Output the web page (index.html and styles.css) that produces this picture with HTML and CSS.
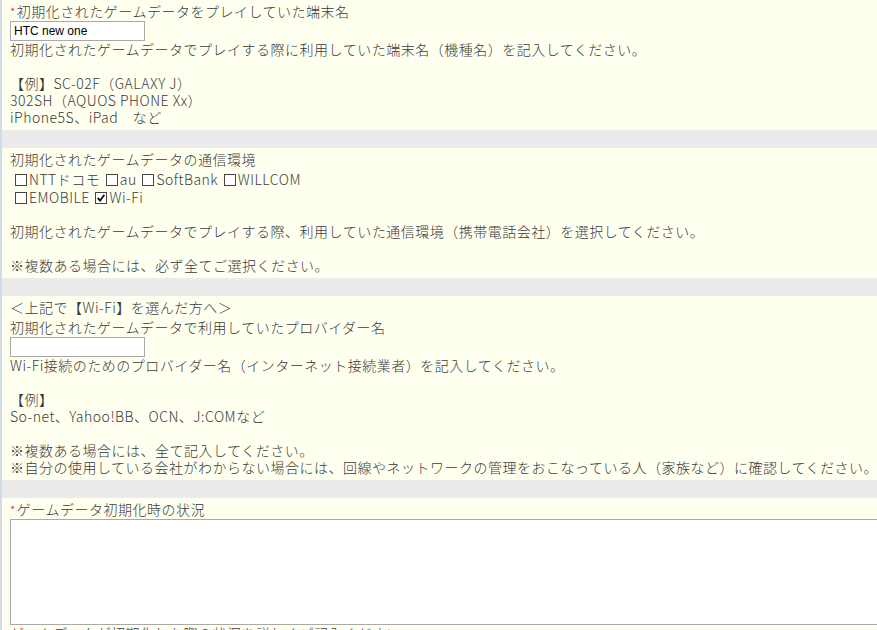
FILE: index.html
```html
<!DOCTYPE html>
<html lang="ja">
<head>
  <meta charset="UTF-8">
  <title>お問い合わせフォーム</title>
  <link rel="stylesheet" href="styles.css">
</head>
<body>
  <div class="form">
    <div class="item">
      <div class="label"><span class="req">*</span>初期化されたゲームデータをプレイしていた端末名</div>
      <input type="text" class="text" value="HTC new one">
      <div class="note">初期化されたゲームデータでプレイする際に利用していた端末名（機種名）を記入してください。<br><br>【例】SC-02F（GALAXY J）<br>302SH（AQUOS PHONE Xx）<br>iPhone5S、iPad　など</div>
    </div>
    <div class="sep"></div>

    <div class="item">
      <div class="label">初期化されたゲームデータの通信環境</div>
      <div class="checks">
        <label class="check"><span class="box"></span>NTTドコモ</label>
        <label class="check"><span class="box"></span>au</label>
        <label class="check"><span class="box"></span>SoftBank</label>
        <label class="check"><span class="box"></span>WILLCOM</label>
        <br>
        <label class="check"><span class="box"></span>EMOBILE</label>
        <label class="check"><span class="box checked"><svg viewBox="0 0 12 12" width="10" height="10"><path d="M2 6 L5 9 L10 2" fill="none" stroke="#111" stroke-width="2.2"/></svg></span>Wi-Fi</label>
      </div>
      <div class="note gap">初期化されたゲームデータでプレイする際、利用していた通信環境（携帯電話会社）を選択してください。<br><br>※複数ある場合には、必ず全てご選択ください。</div>
    </div>
    <div class="sep"></div>

    <div class="item">
      <div class="label lead">＜上記で【Wi-Fi】を選んだ方へ＞</div>
      <div class="label">初期化されたゲームデータで利用していたプロバイダー名</div>
      <input type="text" class="text" value="">
      <div class="note">Wi-Fi接続のためのプロバイダー名（インターネット接続業者）を記入してください。<br><br>【例】<br>So-net、Yahoo!BB、OCN、J:COMなど<br><br>※複数ある場合には、全て記入してください。<br>※自分の使用している会社がわからない場合には、回線やネットワークの管理をおこなっている人（家族など）に確認してください。</div>
    </div>
    <div class="sep"></div>

    <div class="item">
      <div class="label"><span class="req">*</span>ゲームデータ初期化時の状況</div>
      <textarea class="area"></textarea>
      <div class="note">ゲームデータが初期化した際の状況を詳しくご記入ください。</div>
    </div>
  </div>
</body>
</html>
```

FILE: styles.css
```css
body {
  margin: 0;
  background: #fffff0;
  overflow: hidden;
  font-family: "Noto Sans CJK JP", "Noto Sans", sans-serif;
  font-size: 14px;
  font-weight: 300;
  line-height: 17px;
  letter-spacing: 0.5px;
  color: #3a3a3a;
}
.form {
  border-left: 2px solid #cfdbe6;
  width: 1000px;
}
.item {
  padding: 3px 0 4px 8px;
}
.sep {
  height: 18px;
  background: #ebebeb;
}
.req {
  color: #cc2222;
  font-size: 12px;
  vertical-align: top;
  margin-right: 1px;
}
.label.lead {
  padding-bottom: 3px;
}
.text {
  display: block;
  box-sizing: border-box;
  width: 135px;
  height: 20px;
  margin: 1px 0 0;
  padding: 1px 3px;
  border: 1px solid #a9a9a9;
  background: #fff;
  font-family: "Liberation Sans", Arial, sans-serif;
  font-size: 12px;
  letter-spacing: 0;
  color: #000;
}
.checks {
  padding-left: 5px;
  line-height: 18px;
  margin-top: 2px;
}
.check {
  margin-right: 2px;
}
.box {
  display: inline-block;
  box-sizing: border-box;
  width: 12px;
  height: 12px;
  border: 1px solid #444;
  background: #fff;
  vertical-align: -1px;
  margin-right: 2px;
  position: relative;
}
.box svg {
  position: absolute;
  left: 0;
  top: 0;
}
.note.gap {
  margin-top: 17px;
}
.area {
  display: block;
  box-sizing: border-box;
  width: 900px;
  height: 106px;
  margin: 1px 0 0;
  border: 1px solid #a9a9a9;
  background: #fff;
  resize: none;
}
```
